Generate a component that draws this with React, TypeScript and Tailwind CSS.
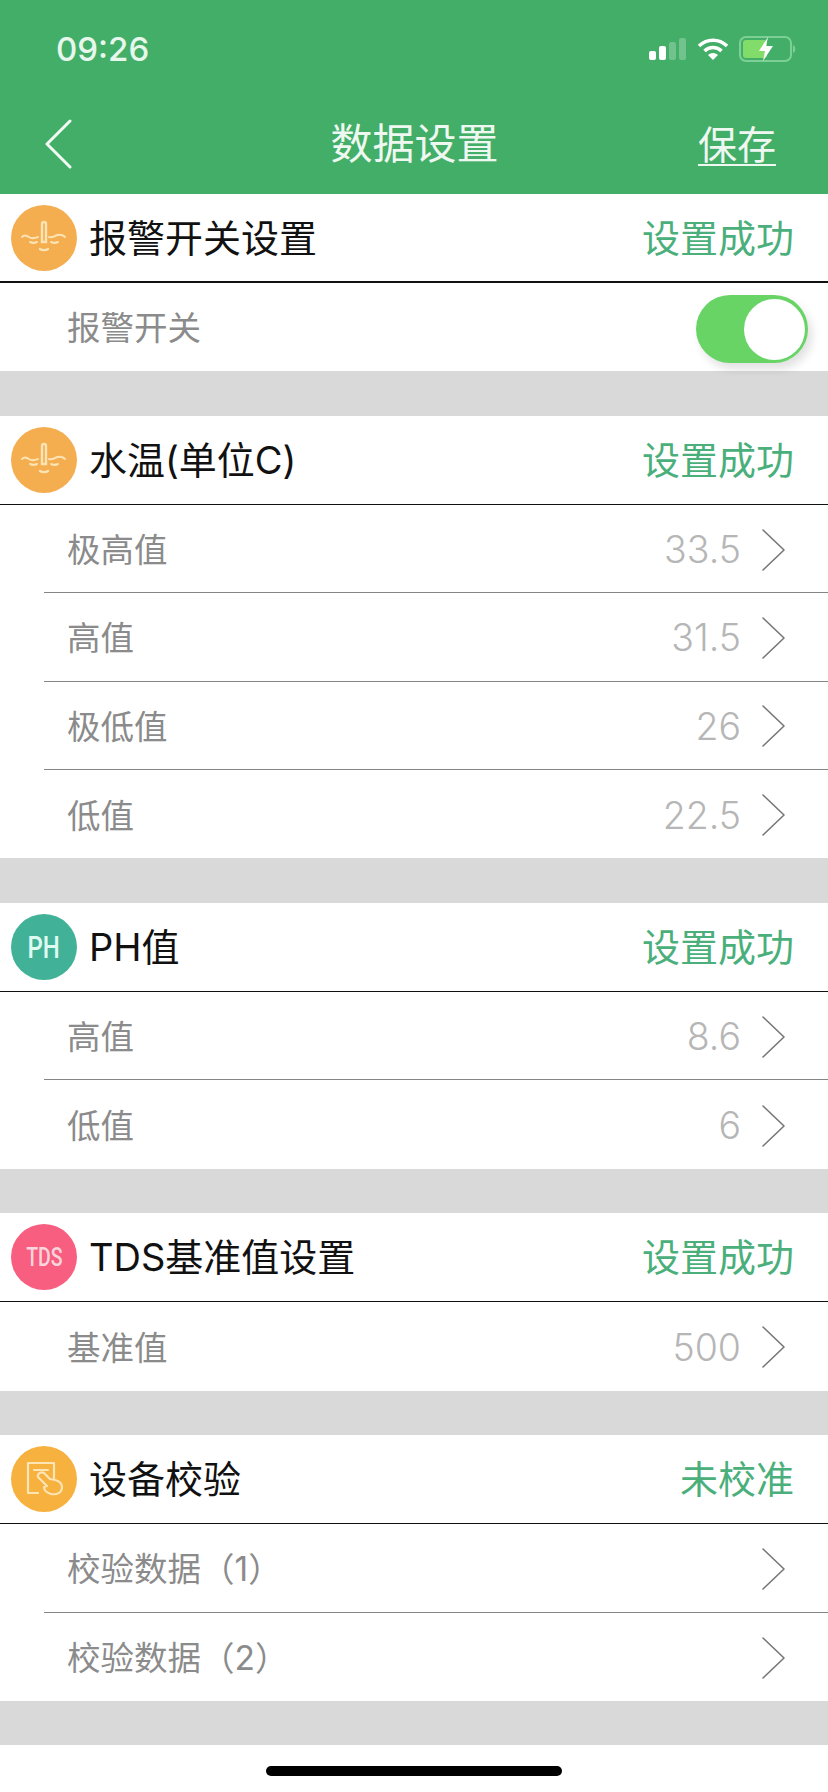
const CJK = "font-['Inter','Noto_Sans_CJK_SC',sans-serif]";

function Thermo() {
  return (
    <svg viewBox="0 0 66 66" className="w-[66px] h-[66px]" fill="none" stroke="#fbe3b4" strokeWidth="2" strokeLinecap="round">
      <path d="M31 37V19a1.800 1.800 0 0 1 4 0v18z" strokeWidth="2.400" />
      <path d="M11 32c2-2 3-2 5-1 2 1 4 3 7 2 2 0 3-1 4-1" />
      <path d="M38 32c3 1 4 0 6-1 2-1 4-2 6-1 2 0 3 1 4 2" />
      <path d="M19 37c2 1 5 1 7 0" />
      <path d="M40 37c2 1 5 1 7 0" />
      <path d="M29 44c2 1.500 6 1.500 8 0" strokeWidth="2.400" />
    </svg>
  );
}

function Hand() {
  return (
    <svg viewBox="0 0 66 66" className="w-[66px] h-[66px]" fill="none" stroke="#fde5b5" strokeWidth="2.200" strokeLinecap="round" strokeLinejoin="round">
      <path d="M27 47H17V17h26v15" />
      <path d="M23 24h14" />
      <path d="M27 31l9 9-3 1c0 3 3 6 7 7 6 1 11-1 11-7 0-4-3-6-7-7l-5-1-6-6c-3-2-7 1-6 4z" />
    </svg>
  );
}

function Circle({ bg, children }: { bg: string; children: React.ReactNode }) {
  return (
    <div className={`w-[66px] h-[66px] rounded-full flex items-center justify-center shrink-0 ${bg}`}>{children}</div>
  );
}

function Header({ icon, title, status, thick }: { icon: React.ReactNode; title: string; status: string; thick?: boolean }) {
  return (
    <div className={`h-[89px] bg-white flex items-center pl-[11px] pr-[34px] border-[#111] ${thick ? "border-b-2" : "border-b"}`}>
      {icon}
      <div className="ml-[12px] text-[38px] leading-none text-[#111] flex-1">{title}</div>
      <div className="text-[38px] leading-none text-[#4aaf7b]">{status}</div>
    </div>
  );
}

function Chevron() {
  return (
    <svg viewBox="0 0 26 44" className="w-[26px] h-[44px] ml-[20px] mt-[2px]" fill="none" stroke="#777777" strokeWidth="1.600" strokeLinecap="round" strokeLinejoin="round">
      <path d="M2 2l21 20L2 42" />
    </svg>
  );
}

function Row({ label, value, last }: { label: string; value?: string; last?: boolean }) {
  return (
    <div className="h-[88.400px] bg-white pl-[44px]">
      <div className={`h-full flex items-center pl-[23px] pr-[41px] ${last ? "" : "border-b border-[#858585]"}`}>
        <div className="flex-1 text-[33.500px] leading-none text-[#8b8b8b] pt-[4px]">{label}</div>
        {value && <div className="text-[37.500px] leading-none text-[#b6b6b6] font-['Inter',sans-serif] font-light pt-[2px]">{value}</div>}
        <Chevron />
      </div>
    </div>
  );
}

function Gap() {
  return <div className="h-[44.500px] bg-[#d9d9d9]" />;
}

export default function App() {
  const orange = <Circle bg="bg-[#f4ae50]"><Thermo /></Circle>;
  return (
    <div className={`w-[828px] h-[1792px] bg-white overflow-hidden ${CJK}`}>
      <div className="h-[194px] bg-[#43ae68] text-white">
        <div className="h-[98px] flex items-center pl-[56px] pr-[31px]">
          <div className="text-[33px] leading-none font-medium text-[#e8f7ec] flex-1 font-['Inter',sans-serif]">09:26</div>
          <svg viewBox="0 0 37 22" className="w-[37px] h-[22px]">
            <rect x="0" y="13" width="7" height="9" rx="2" fill="#fff" />
            <rect x="10" y="8" width="7" height="14" rx="2" fill="#fff" />
            <rect x="20" y="4" width="7" height="18" rx="2" fill="#fff" opacity="0.25" />
            <rect x="30" y="0" width="7" height="22" rx="2" fill="#fff" opacity="0.25" />
          </svg>
          <svg viewBox="0 0 30 22" className="w-[30px] h-[22px] ml-[12px]">
            <path d="M1 8a20 20 0 0 1 28 0" fill="none" stroke="#fff" strokeWidth="3.500" />
            <path d="M6.500 13a12 12 0 0 1 17 0" fill="none" stroke="#fff" strokeWidth="3.500" />
            <path d="M15 22l-5-5a7 7 0 0 1 10 0z" fill="#fff" />
          </svg>
          <svg viewBox="0 0 58 26" className="w-[58px] h-[26px] ml-[11px]">
            <rect x="1" y="1" width="51" height="24" rx="6" fill="none" stroke="#7dd095" strokeWidth="2" />
            <rect x="4" y="4" width="24" height="18" rx="3" fill="#82dc6a" />
            <path d="M54 9c3 1 3 7 0 8z" fill="#7dd095" />
            <path d="M29 1L20 15h6l-2 10 10-15h-7z" fill="#fff" />
          </svg>
        </div>
        <div className="h-[96px] flex items-center pl-[44px] pr-[52px] pb-[4px]">
          <svg viewBox="0 0 28 50" className="w-[28px] h-[50px]" fill="none" stroke="#f2faf4" strokeWidth="3" strokeLinecap="round" strokeLinejoin="round">
            <path d="M26 2L3 25l23 23" />
          </svg>
          <div className="flex-1 text-center text-[42px] leading-none text-[#eef8f1] pl-[59px]">数据设置</div>
          <div className="text-[39px] leading-none text-[#eef8f1] underline underline-offset-[5px] decoration-2">保存</div>
        </div>
      </div>

      <Header icon={orange} title="报警开关设置" status="设置成功" thick />
      <div className="h-[88.400px] bg-white flex items-center pl-[67px] pr-[20px]">
        <div className="flex-1 text-[33.500px] leading-none text-[#8b8b8b] pt-[4px]">报警开关</div>
        <div className="w-[112px] h-[68px] mt-[4px] rounded-full bg-[#67d465] flex items-center justify-end pr-[3px] shadow-[4px_6px_10px_rgba(0,0,0,0.12)]">
          <div className="w-[61px] h-[61px] rounded-full bg-white" />
        </div>
      </div>
      <Gap />

      <Header icon={orange} title="水温(单位C)" status="设置成功" />
      <Row label="极高值" value="33.5" />
      <Row label="高值" value="31.5" />
      <Row label="极低值" value="26" />
      <Row label="低值" value="22.5" last />
      <Gap />

      <Header
        icon={<Circle bg="bg-[#41b298]"><span className="text-[32px] leading-none font-medium text-[#dffaf1] font-['Roboto',sans-serif] scale-x-[0.75]">PH</span></Circle>}
        title="PH值"
        status="设置成功"
      />
      <Row label="高值" value="8.6" />
      <Row label="低值" value="6" last />
      <Gap />

      <Header
        icon={<Circle bg="bg-[#f85e80]"><span className="text-[25px] leading-none font-medium text-[#fbd5dd] font-['Roboto',sans-serif] scale-x-[0.78]">TDS</span></Circle>}
        title="TDS基准值设置"
        status="设置成功"
      />
      <Row label="基准值" value="500" last />
      <Gap />

      <Header icon={<Circle bg="bg-[#f7b13e]"><Hand /></Circle>} title="设备校验" status="未校准" />
      <Row label="校验数据（1）" />
      <Row label="校验数据（2）" last />
      <Gap />

      <div className="pt-[21px] flex justify-center">
        <div className="w-[296px] h-[10px] rounded-full bg-black" />
      </div>
    </div>
  );
}
